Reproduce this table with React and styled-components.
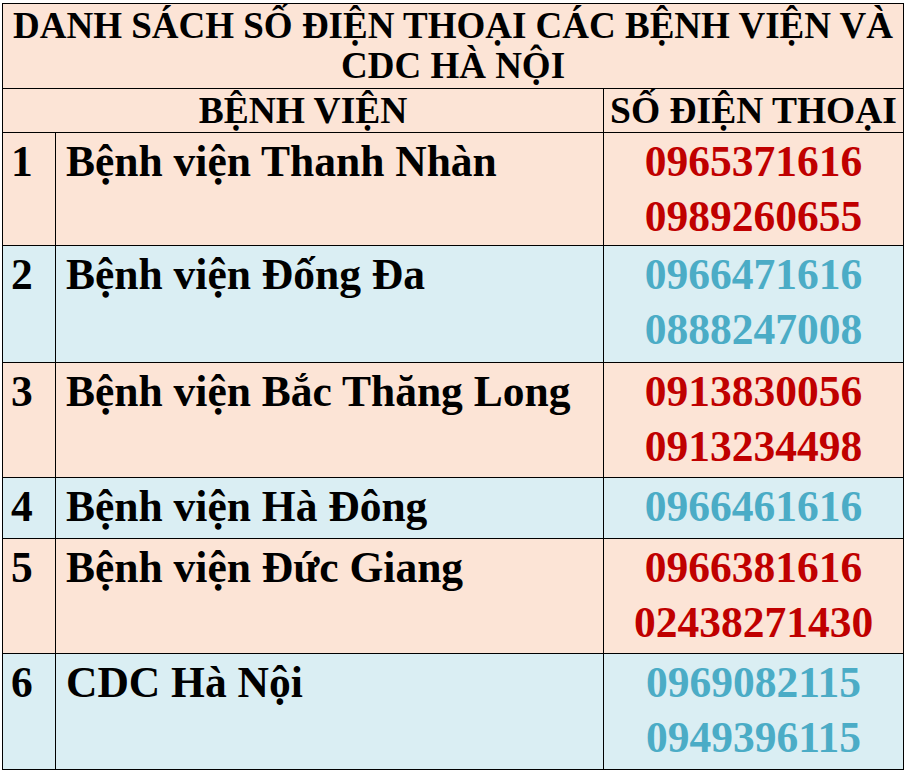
import React from 'react'
import styled, { createGlobalStyle } from 'styled-components'

const GlobalStyle = createGlobalStyle`
  html, body {
    margin: 0;
    padding: 0;
    background: #fff;
  }
`

const PEACH = '#fce4d6'
const AQUA = '#daeef3'

const rows = [
  { no: 1, name: 'Bệnh viện Thanh Nhàn', phones: ['0965371616', '0989260655'], tone: 'peach', height: 113 },
  { no: 2, name: 'Bệnh viện Đống Đa', phones: ['0966471616', '0888247008'], tone: 'aqua', height: 117 },
  { no: 3, name: 'Bệnh viện Bắc Thăng Long', phones: ['0913830056', '0913234498'], tone: 'peach', height: 115 },
  { no: 4, name: 'Bệnh viện Hà Đông', phones: ['0966461616'], tone: 'aqua', height: 61 },
  { no: 5, name: 'Bệnh viện Đức Giang', phones: ['0966381616', '02438271430'], tone: 'peach', height: 115 },
  { no: 6, name: 'CDC Hà Nội', phones: ['0969082115', '0949396115'], tone: 'aqua', height: 116 },
]

const Page = styled.div`
  padding: 3px 0 0 2px;
`

const Table = styled.table`
  width: 902px;
  border-collapse: collapse;
  table-layout: fixed;
  font-family: "Liberation Serif", "Times New Roman", serif;
  font-weight: bold;
  color: #000;
`

const Row = styled.tr`
  background: ${p => (p.$tone === 'aqua' ? AQUA : PEACH)};
  height: ${p => p.$height}px;
`

const Cell = styled.td`
  border: 1px solid #000;
  padding: 0;
  vertical-align: top;
`

const TitleCell = styled(Cell)`
  vertical-align: middle;
  text-align: center;
  font-size: 37px;
  line-height: 40px;
`

const HeadCell = styled(Cell)`
  vertical-align: middle;
  text-align: center;
  font-size: 37.5px;
  line-height: 40px;
  padding-top: 1px;
`

const NoCell = styled(Cell)`
  font-size: 43.5px;
  line-height: 55px;
  padding: 1px 0 0 8px;
`

const NameCell = styled(Cell)`
  font-size: 43.5px;
  line-height: 55px;
  padding: 1px 0 0 10px;
  white-space: nowrap;
`

const PhoneCell = styled(Cell)`
  text-align: center;
  font-size: 43.5px;
  line-height: 55px;
  padding-top: 1px;
  color: ${p => (p.$tone === 'aqua' ? '#4bacc6' : '#c00000')};
`

const Phone = styled.div``

export default function App() {
  return (
    <>
      <GlobalStyle />
      <Page>
        <Table>
          <colgroup>
            <col style={{ width: 53 }} />
            <col style={{ width: 548 }} />
            <col style={{ width: 300 }} />
          </colgroup>
          <tbody>
            <Row $height={85}>
              <TitleCell colSpan={3}>
                DANH SÁCH SỐ ĐIỆN THOẠI CÁC BỆNH VIỆN VÀ
                <br />
                CDC HÀ NỘI
              </TitleCell>
            </Row>
            <Row $height={44}>
              <HeadCell colSpan={2}>BỆNH VIỆN</HeadCell>
              <HeadCell>SỐ ĐIỆN THOẠI</HeadCell>
            </Row>
            {rows.map(r => (
              <Row key={r.no} $tone={r.tone} $height={r.height}>
                <NoCell>{r.no}</NoCell>
                <NameCell>{r.name}</NameCell>
                <PhoneCell $tone={r.tone}>
                  {r.phones.map(p => (
                    <Phone key={p}>{p}</Phone>
                  ))}
                </PhoneCell>
              </Row>
            ))}
          </tbody>
        </Table>
      </Page>
    </>
  )
}
